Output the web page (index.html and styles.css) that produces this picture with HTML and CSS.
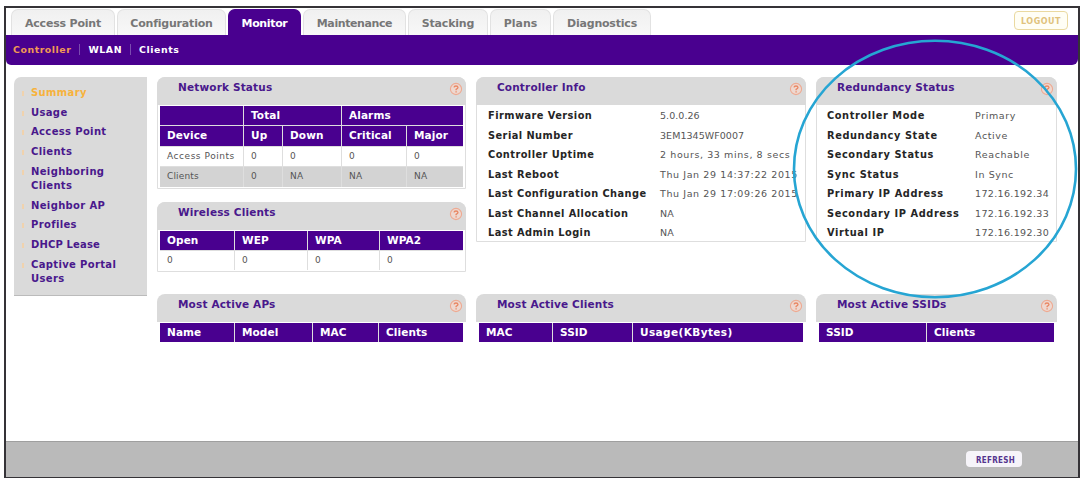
FILE: index.html
```
<!DOCTYPE html>
<html lang="en">
<head>
<meta charset="utf-8">
<title>Wireless Controller</title>
<link rel="stylesheet" href="styles.css">
</head>
<body>
<svg class="defs" width="0" height="0"><defs>
<symbol id="help" viewBox="0 0 14 14"><circle cx="7" cy="7" r="5.6" fill="#eed8d0" stroke="#eeaa92" stroke-width="1.1"/><path d="M5 5.4Q5.2 4 7 4T9 5.5Q9 6.5 7.1 7.4V8.2M7.1 9.3v1.2" fill="none" stroke="#e98763" stroke-width="1.3"/></symbol>
</defs></svg>
<div class="frame">
  <header class="top">
    <nav class="tabs">
      <a class="tab t1">Access Point</a><a class="tab t2">Configuration</a><a class="tab t3 active">Monitor</a><a class="tab t4">Maintenance</a><a class="tab t5">Stacking</a><a class="tab t6">Plans</a><a class="tab t7">Diagnostics</a>
    </nav>
    <button class="logout">LOGOUT</button>
  </header>
  <nav class="subnav"><a class="current">Controller</a><a>WLAN</a><a>Clients</a></nav>
  <main class="content">
    <aside class="side">
      <a class="current">Summary</a><a>Usage</a><a>Access Point</a><a>Clients</a><a>Neighboring<br>Clients</a><a>Neighbor AP</a><a>Profiles</a><a class="dhcp">DHCP Lease</a><a>Captive Portal<br>Users</a>
    </aside>
    <div class="board">
      <div class="stack">
        <section class="panel">
          <h2>Network Status<svg class="help"><use href="#help"/></svg></h2>
          <div class="table network">
            <b></b><b class="span">Total</b><b class="span">Alarms</b>
            <b>Device</b><b>Up</b><b>Down</b><b>Critical</b><b>Major</b>
            <i>Access Points</i><i>0</i><i>0</i><i>0</i><i>0</i>
            <i class="alt">Clients</i><i class="alt">0</i><i class="alt">NA</i><i class="alt">NA</i><i class="alt">NA</i>
          </div>
        </section>
        <section class="panel">
          <h2>Wireless Clients<svg class="help"><use href="#help"/></svg></h2>
          <div class="table wireless"><b>Open</b><b>WEP</b><b>WPA</b><b>WPA2</b><i>0</i><i>0</i><i>0</i><i>0</i></div>
        </section>
      </div>
      <section class="panel info">
        <h2>Controller Info<svg class="help"><use href="#help"/></svg></h2>
        <dl class="facts controller">
          <dt>Firmware Version</dt><dd class="tight">5.0.0.26</dd>
          <dt>Serial Number</dt><dd class="tight">3EM1345WF0007</dd>
          <dt>Controller Uptime</dt><dd>2 hours, 33 mins, 8 secs</dd>
          <dt>Last Reboot</dt><dd>Thu Jan 29 14:37:22 2015</dd>
          <dt>Last Configuration Change</dt><dd>Thu Jan 29 17:09:26 2015</dd>
          <dt>Last Channel Allocation</dt><dd class="tight">NA</dd>
          <dt>Last Admin Login</dt><dd class="tight">NA</dd>
        </dl>
      </section>
      <section class="panel info">
        <h2>Redundancy Status<svg class="help"><use href="#help"/></svg></h2>
        <dl class="facts redundancy">
          <dt>Controller Mode</dt><dd>Primary</dd>
          <dt>Redundancy State</dt><dd>Active</dd>
          <dt>Secondary Status</dt><dd>Reachable</dd>
          <dt>Sync Status</dt><dd>In Sync</dd>
          <dt>Primary IP Address</dt><dd class="ip">172.16.192.34</dd>
          <dt>Secondary IP Address</dt><dd class="ip">172.16.192.33</dd>
          <dt>Virtual IP</dt><dd class="ip">172.16.192.30</dd>
        </dl>
      </section>
      <section class="panel flat">
        <h2>Most Active APs<svg class="help"><use href="#help"/></svg></h2>
        <div class="table aps"><b>Name</b><b>Model</b><b>MAC</b><b>Clients</b></div>
      </section>
      <section class="panel flat">
        <h2>Most Active Clients<svg class="help"><use href="#help"/></svg></h2>
        <div class="table clients"><b>MAC</b><b>SSID</b><b class="usage">Usage(KBytes)</b></div>
      </section>
      <section class="panel flat">
        <h2>Most Active SSIDs<svg class="help"><use href="#help"/></svg></h2>
        <div class="table ssids"><b>SSID</b><b>Clients</b></div>
      </section>
    </div>
  </main>
  <footer class="bottom"><button class="refresh">REFRESH</button></footer>
</div>
<svg class="callout" viewBox="0 0 286 260"><ellipse cx="143" cy="130" rx="141" ry="128.2"/></svg>
</body>
</html>
```
FILE: styles.css
```
* { box-sizing: border-box; }
body { margin: 0; padding: 6px 1px 0 4px; width: 1081px; height: 478px; overflow: hidden; background: #fff; font-family: "DejaVu Sans", Verdana, sans-serif; font-size: 9px; color: #555; }
.defs { position: absolute; }
.frame { height: 472px; border: 2px solid #353337; border-bottom-width: 1px; display: flex; flex-direction: column; }
.top { height: 27px; display: flex; justify-content: space-between; padding-left: 5px; flex: none; }
.tabs { display: flex; gap: 2px; padding-top: 1px; }
.tab { height: 26px; border: 1px solid #e2e2e2; border-bottom: 0; border-radius: 7px 7px 0 0; background: linear-gradient(#f0f0f0, #f8f8f8); color: #777; font-size: 11px; font-weight: bold; line-height: 27px; text-align: center; white-space: nowrap; }
.tab.active { background: #49008f; border-color: #49008f; color: #fff; }
.t1 { width: 104px; letter-spacing: -.2px; }
.t2 { width: 109px; letter-spacing: -.2px; }
.t3 { width: 73px; letter-spacing: -.35px; }
.t4 { width: 103px; letter-spacing: -.4px; }
.t5 { width: 80px; letter-spacing: -.2px; }
.t6 { width: 61px; }
.t7 { width: 98px; letter-spacing: -.2px; }
.logout { width: 54px; height: 19px; margin: 3px 10px 0 0; padding: 1px 0 0; border: 1px solid #ead9a0; border-radius: 4px; background: #fffef5; color: #e0c27c; font: bold 8px "DejaVu Sans", sans-serif; letter-spacing: .5px; }
.subnav { height: 30px; flex: none; display: flex; align-items: center; padding: 0 0 1px 7px; background: #49008f; border-radius: 0 0 6px 5px; color: #fff; font-weight: bold; font-size: 9.4px; letter-spacing: .55px; }
.subnav a + a { margin-left: 8px; padding-left: 8px; border-left: 1px solid #7b4bb0; line-height: 11px; }
.subnav .current { color: #f29a54; }
.content { flex: 1; display: flex; gap: 10px; padding: 12px 0 0 8px; align-items: flex-start; }
.side { width: 133px; height: 219px; padding: 9px 0 0 17px; background: #dadada; border-radius: 7px 0 0 0; border-bottom: 1px solid #bbb; color: #49188c; font-weight: bold; font-size: 10px; letter-spacing: .35px; line-height: 14.2px; display: flex; flex-direction: column; gap: 5.5px; }
.side .dhcp { letter-spacing: .15px; }
.side a { position: relative; }
.side a::before { content: ""; position: absolute; left: -9px; top: 5px; width: 2px; height: 5px; background: #f0d2ad; }
.side .current { color: #f7b23c; }
.board { display: grid; grid-template-columns: 309px 330px 241px; column-gap: 10px; grid-template-rows: 217px 50px; align-items: start; }
.stack { display: flex; flex-direction: column; gap: 13px; }
.panel { border: 1px solid #dedede; border-radius: 8px 8px 0 0; padding: 0 2px 1px; background: #fff; }
.panel h2 { display: flex; justify-content: space-between; height: 28px; margin: -1px -3px 1px; padding: 4px 3px 0 21px; background: #dadada; border-radius: 8px 8px 0 0; color: #49188c; font-size: 10.5px; line-height: 13px; letter-spacing: .16px; }
.help { width: 14px; height: 14px; margin-top: 1px; }
.info { height: 165px; }
.flat { border-color: transparent; }
.table { display: grid; grid-auto-rows: 19.4px; gap: 1px 1px; background: #dedede; }
.table b, .table i { padding-left: 7px; font-style: normal; line-height: 19px; background: #fff; white-space: nowrap; overflow: hidden; }
.table b { background: #49008f; color: #fff; font-size: 10.5px; letter-spacing: .1px; }
.table b.usage { letter-spacing: .4px; }
.table i { font-size: 9px; color: #555; letter-spacing: .55px; }
.table i.alt { background: #d3d3d3; letter-spacing: .15px; }
.table .span { grid-column: span 2; }
.network { grid-template-columns: 83px 38px 58px 64px 1fr; }
.wireless { grid-template-columns: 74px 72px 71px 1fr; }
.aps { grid-template-columns: 74px 77px 65px 1fr; }
.clients { grid-template-columns: 73px 79px 1fr; }
.ssids { grid-template-columns: 107px 1fr; }
.facts { display: grid; grid-auto-rows: 19.5px; margin: 0; padding: 0 0 0 9px; line-height: 19px; white-space: nowrap; }
.facts dt { font-weight: bold; color: #252525; font-size: 9.8px; letter-spacing: .45px; }
.facts dd { margin: 0; font-size: 9.5px; letter-spacing: .6px; }
.facts dd.tight { letter-spacing: .05px; }
.facts dd.ip { letter-spacing: .35px; }
.controller { grid-template-columns: 172px 1fr; }
.redundancy { grid-template-columns: 148px 1fr; padding-left: 8px; }
.redundancy dt { letter-spacing: .6px; }
.bottom { height: 36px; flex: none; display: flex; justify-content: flex-end; padding: 9px 56px 0 0; background: #bababa; border-top: 1px solid #9f9f9f; }
.refresh { width: 56px; height: 16px; padding: 3px 0 0 3px; border: 0; border-radius: 4px; background: #f6f4f9; color: #55358f; font: bold 8px "DejaVu Sans Condensed", "DejaVu Sans", sans-serif; letter-spacing: .3px; }
.callout { position: absolute; left: 792px; top: 39px; width: 286px; height: 260px; fill: none; stroke: #26a5d3; stroke-width: 2.6; pointer-events: none; }
```
